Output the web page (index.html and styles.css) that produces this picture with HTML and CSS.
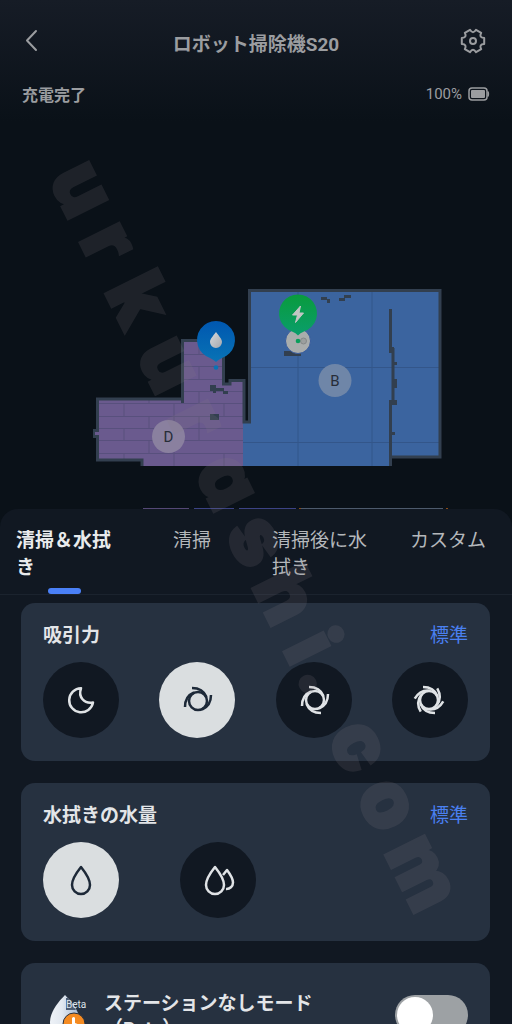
FILE: index.html
```html
<!DOCTYPE html>
<html lang="ja">
<head>
<meta charset="utf-8">
<meta name="viewport" content="width=device-width, initial-scale=1">
<title>ロボット掃除機S20</title>
<link rel="stylesheet" href="styles.css">
</head>
<body>
<svg class="defs" aria-hidden="true">
  <defs>
    <path id="blade" d="M-6 -13C1 -13 6 -10 8.500 -4"/>
    <path id="drop" d="M0 -13C4 -8 9 -1 9 5A9 9 0 0 1 -9 5C-9 -1 -4 -8 0 -13Z"/>
  </defs>
</svg>
<div class="app">
  <header class="top">
    <div class="bar">
      <button class="icon-btn" type="button" aria-label="戻る">
        <svg width="20" height="26" viewBox="0 0 20 26"><path class="line" d="M14 4L5 13.500L14 23"/></svg>
      </button>
      <h1 class="title">ロボット掃除機S20</h1>
      <button class="icon-btn" type="button" aria-label="設定">
        <svg width="28" height="28" viewBox="-13 -14 28 28">
          <path class="line" d="M11.200 -3L11.200 3Q5.600 3.200 8.200 8.200L3 11.200Q0 6.500 -3 11.200L-8.200 8.200Q-5.600 3.200 -11.200 3L-11.200 -3Q-5.600 -3.200 -8.200 -8.200L-3 -11.200Q0 -6.500 3 -11.200L8.200 -8.200Q5.600 -3.200 11.200 -3Z"/>
          <circle class="line" r="3"/>
        </svg>
      </button>
    </div>
    <div class="status">
      <span class="state">充電完了</span>
      <span class="battery">100%
        <svg width="22" height="14" viewBox="0 0 22 14" aria-hidden="true">
          <rect x="1" y="1" width="18" height="12" rx="3" fill="none" stroke="#9b9da0" stroke-width="1.500"/>
          <rect x="3" y="3" width="14" height="8" rx="1" fill="#9b9da0"/>
          <path d="M20 4.500Q21.500 7 20 9.500Z" fill="#9b9da0" stroke="#9b9da0"/>
        </svg>
      </span>
    </div>
  </header>

  <svg class="map" viewBox="0 122 512 387" role="img" aria-label="間取りマップ">
    <defs>
      <linearGradient id="pinBlue" x1="0" y1="0" x2="0" y2="1"><stop offset="0" stop-color="#0057b0"/><stop offset="1" stop-color="#0873b5"/></linearGradient>
      <linearGradient id="pinGreen" x1="0" y1="0" x2="0" y2="1"><stop offset="0" stop-color="#099b3d"/><stop offset="1" stop-color="#0a9e6b"/></linearGradient>
      <linearGradient id="grey" x1="0" y1="0" x2="1" y2="1"><stop offset="0" stop-color="#d8dadd"/><stop offset="1" stop-color="#a5a8ae"/></linearGradient>
    </defs>
    <path fill="#6a5a8e" d="M98 399H183V341H223V385H230V381H243V466H142V460H98Z"/>
    <path fill="#3b649f" d="M251 292H440V457H391V466H243V423H251Z"/>
    <path stroke="#33568a" d="M298 292V466M372 292V466M251 367.500H440M243 442.500H440"/>
    <path fill="none" stroke="#58507d" d="M183 354.500H223M183 366.500H223M183 379.500H223M183 391.500H243M98 403.500H243M98 416.500H243M98 428.500H243M98 440.500H243M98 453.500H243M199 342V354M199 366V379M199 391V403M149 399V403M124 403V416M174 403V416M224 403V416M149 416V428M199 416V428M124 428V440M174 416V428M199 428V440M174 440V453M124 453V460M149 440V453M224 453V466M174 453V466"/>
    <g fill="none" stroke="#323f4f" stroke-width="3">
      <path d="M142 466V460H97.500V399H182.500V340.500H223.500V384H230V380.500H244V422H249.500V290.500H440V457H392M182.500 398V403"/>
      <path d="M390.500 309V351M393 348V402M390.500 400V466"/>
    </g>
    <path fill="#323f4f" d="M93 429H98V438H93ZM389 347H394V353H389ZM394 362H397V365H394ZM393 379H397V388H393ZM389 400H397V405H389ZM392 432H395V435H392ZM210 385H216V388H224V391H228V394H223V391H216V393H213V391H210ZM210 414H219V420H210ZM321 297H327V299H330V303H327V300H321ZM339 298H344V295H351V298H345V301H339ZM284 351H301V356H284Z"/>
    <path fill="#6a5a8e" d="M95 432H99V435H95Z"/>
    <circle cx="168.500" cy="436.500" r="16.500" fill="#8a809f"/>
    <text class="room" x="168.500" y="442">D</text>
    <circle cx="335" cy="380.500" r="16.500" fill="#6f86a8"/>
    <text class="room" x="335" y="386">B</text>

    <path fill="url(#pinBlue)" d="M210 358A19 19 0 1 1 222 358Q218 360 216 362Q214 360 210 358Z"/>
    <circle cx="216" cy="367.500" r="2.300" fill="#0873b5"/>
    <path fill="url(#grey)" d="M216 332C219 336 222 339 222 342A6 6 0 0 1 210 342C210 339 213 336 216 332Z"/>

    <circle cx="298" cy="341" r="12.500" fill="#a9adac" stroke="#365b9e"/>
    <circle cx="303.500" cy="341" r="3" fill="#9b9f9e" stroke="#858989"/>
    <path fill="url(#pinGreen)" d="M292 331.500A19 19 0 1 1 304 331.500Q300 333 298 335.500Q296 333 292 331.500Z"/>
    <circle cx="298" cy="341" r="2.300" fill="#0a9e5b"/>
    <path fill="#c2c6c4" stroke="#c2c6c4" stroke-linejoin="round" d="M300.500 306L292.500 315H297.500L295.500 322.500L303.500 313H299Z"/>

    <path stroke="#544875" stroke-width="2" d="M143 509H189"/>
    <path stroke="#3c4384" stroke-width="2" d="M194 509H234M239 509H296"/>
    <path stroke="#4d5a6c" stroke-width="2" d="M300 509H443"/>
    <path stroke="#8c4b16" stroke-width="2" d="M299 509H301M446 509H448"/>
  </svg>

  <main class="sheet">
    <nav class="tabs" aria-label="清掃モード">
      <button class="tab is-active" type="button"><span class="tab-text">清掃＆水拭き</span></button>
      <button class="tab" type="button"><span class="tab-text">清掃</span></button>
      <button class="tab" type="button"><span class="tab-text">清掃後に水拭き</span></button>
      <button class="tab" type="button"><span class="tab-text">カスタム</span></button>
    </nav>
    <div class="cards">
      <section class="card">
        <div class="card-head"><h2 class="card-title">吸引力</h2><span class="value">標準</span></div>
        <div class="options spread">
          <button class="option" type="button" aria-label="静音">
            <svg class="glyph" viewBox="-18 -18 36 36"><path d="M0 -11.700A12 12 0 1 0 12 2.500C3 4 -3 -3 0 -11.700Z"/></svg>
          </button>
          <button class="option is-on" type="button" aria-label="標準" aria-pressed="true">
            <svg class="glyph" viewBox="-19 -19 36 36"><circle r="9"/><use href="#blade"/><use href="#blade" transform="rotate(90)"/><use href="#blade" transform="rotate(270)"/></svg>
          </button>
          <button class="option" type="button" aria-label="強">
            <svg class="glyph" viewBox="-19 -18 36 36"><circle r="9"/><use href="#blade"/><use href="#blade" transform="rotate(90)"/><use href="#blade" transform="rotate(180)"/><use href="#blade" transform="rotate(270)"/></svg>
          </button>
          <button class="option" type="button" aria-label="最大">
            <svg class="glyph" viewBox="-17 -18 36 36"><circle r="9"/><use href="#blade"/><use href="#blade" transform="rotate(60)"/><use href="#blade" transform="rotate(120)"/><use href="#blade" transform="rotate(180)"/><use href="#blade" transform="rotate(240)"/><use href="#blade" transform="rotate(300)"/></svg>
          </button>
        </div>
      </section>
      <section class="card">
        <div class="card-head"><h2 class="card-title">水拭きの水量</h2><span class="value">標準</span></div>
        <div class="options wide">
          <button class="option is-on" type="button" aria-label="標準" aria-pressed="true">
            <svg class="glyph" viewBox="-18 -18 36 36"><use href="#drop"/></svg>
          </button>
          <button class="option" type="button" aria-label="多め">
            <svg class="glyph" viewBox="-15 -18 36 36"><use href="#drop"/><path d="M8 -5L12 -10C15 -6 18 -1 18 2.500A6.500 6.500 0 0 1 11 9"/></svg>
          </button>
        </div>
      </section>
      <section class="card mode">
        <svg class="mode-icon" width="46" height="46" viewBox="43 993 46 46" aria-hidden="true">
          <defs><linearGradient id="water" x1="0" y1="0" x2="1" y2="0"><stop offset="0" stop-color="#eef2f7"/><stop offset="0.400" stop-color="#e2e8f0"/><stop offset="1" stop-color="#9fb5d2"/></linearGradient></defs>
          <path fill="url(#water)" d="M65 995C57 1003 50 1013 50 1022A15 15 0 0 0 80 1022C80 1013 73 1003 65 995Z"/>
          <path fill="#4b5b72" d="M66 998H68L76 1010H66Z"/>
          <text class="beta" x="66" y="1008">Beta</text>
          <circle cx="74" cy="1024" r="11" fill="#f58b22" stroke="#263140"/>
          <path fill="#fff" d="M72 1018Q74 1016 75 1018V1023L80 1025V1031H71L68 1026L72 1025Z"/>
        </svg>
        <label class="mode-name" for="station">ステーションなしモード<br>（Beta）</label>
        <input class="switch" id="station" type="checkbox" role="switch">
      </section>
    </div>
  </main>

  <svg class="watermark" viewBox="0 0 512 1024" aria-hidden="true">
    <text transform="translate(79 188) rotate(63.500)" y="23" x="2 62 126 198 260 329 395 457 514 546 624 689 766">urkurashi.com</text>
  </svg>
</div>
</body>
</html>
```
FILE: styles.css
```css
* { box-sizing: border-box; }

body {
  margin: 0;
  background: #0a1118;
  color: #e3e5e8;
  font-family: Roboto, "Noto Sans CJK JP", sans-serif;
}

button {
  border: 0;
  padding: 0;
  background: none;
  color: inherit;
  font: inherit;
}

h1, h2 { margin: 0; }

.defs {
  position: absolute;
  width: 0;
  height: 0;
}

.app {
  position: relative;
  display: flex;
  flex-direction: column;
  height: 100vh;
  overflow: hidden;
}

.top {
  flex: none;
  height: 122px;
  padding: 22px 22px 0;
  background: linear-gradient(#161c26, #0a1118);
  color: #9b9da0;
}

.bar {
  display: flex;
  align-items: center;
  justify-content: space-between;
  height: 40px;
}

.icon-btn {
  display: flex;
  width: 30px;
  height: 30px;
}

.line {
  fill: none;
  stroke: #9b9da0;
  stroke-width: 2;
  stroke-linecap: round;
  stroke-linejoin: round;
}

.title {
  padding-top: 5px;
  font-size: 19px;
  line-height: 28px;
  font-weight: 700;
}

.status {
  display: flex;
  align-items: center;
  justify-content: space-between;
  height: 24px;
  margin-top: 20px;
}

.state {
  padding-top: 4px;
  font-size: 16px;
  line-height: 24px;
  font-weight: 700;
}

.battery {
  display: flex;
  align-items: center;
  gap: 6px;
  font-size: 15px;
  line-height: 24px;
}

.map {
  display: block;
  flex: none;
  width: 100%;
}

.room {
  fill: #272d38;
  font-size: 15px;
  text-anchor: middle;
}

.sheet {
  flex: 1;
  min-height: 0;
  display: flex;
  flex-direction: column;
  border-radius: 18px 18px 0 0;
  background: #111822;
}

.tabs {
  flex: none;
  display: grid;
  grid-template-columns: repeat(4, 1fr);
  padding-top: 18px;
  border-bottom: 1px solid #1b232e;
}

.tab {
  display: flex;
  flex-direction: column;
  align-items: center;
  justify-content: space-between;
  gap: 7px;
  color: #b4b7bb;
  font-size: 19px;
  line-height: 27px;
}

.tab-text {
  max-width: 96px;
  text-align: left;
}

.tab::after {
  content: "";
  width: 33px;
  height: 6px;
  border-radius: 3px;
}

.is-active {
  color: #e9ebed;
  font-weight: 700;
}

.is-active::after { background: #4a80f7; }

.cards {
  flex: 1;
  min-height: 0;
  display: flex;
  flex-direction: column;
  gap: 22px;
  padding: 8px 22px 0 21px;
  overflow: hidden;
}

.card {
  flex: none;
  padding: 18px 22px 23px;
  border-radius: 14px;
  background: #263140;
}

.card-head {
  display: flex;
  justify-content: space-between;
  padding-top: 1px;
  font-size: 19px;
  line-height: 28px;
}

.card-title {
  font-size: 19px;
  font-weight: 700;
}

.value { color: #4a80f0; }

.options {
  display: flex;
  margin-top: 12px;
}

.spread { justify-content: space-between; }

.wide { gap: 61px; }

.option {
  display: flex;
  align-items: center;
  justify-content: center;
  width: 76px;
  height: 76px;
  border-radius: 50%;
  background: #111822;
  color: #e0e3e6;
}

.is-on {
  background: #dadee0;
  color: #1d2938;
}

.glyph {
  width: 36px;
  height: 36px;
  fill: none;
  stroke: currentColor;
  stroke-width: 2.500;
  stroke-linejoin: round;
}

.mode {
  display: flex;
  align-items: flex-start;
  gap: 15px;
  padding-top: 28px;
}

.mode-icon {
  flex: none;
  margin-top: 2px;
}

.beta {
  fill: #dde3ea;
  font-size: 10px;
}

.mode-name {
  flex: 1;
  font-size: 19px;
  line-height: 25px;
  font-weight: 700;
}

.switch {
  appearance: none;
  flex: none;
  width: 73px;
  height: 40px;
  margin: 4px 0 0;
  padding: 2px;
  border-radius: 20px;
  background: #9da1a4;
}

.switch::before {
  content: "";
  display: block;
  width: 36px;
  height: 36px;
  border-radius: 50%;
  background: #fff;
}

.switch:checked { background: #4a80f7; }

.switch:checked::before { margin-left: auto; }

.watermark {
  position: absolute;
  top: 0;
  left: 0;
  width: 100%;
  pointer-events: none;
  opacity: 0.16;
  fill: #877d84;
  stroke: #877d84;
  stroke-width: 4;
  font-family: Inter, sans-serif;
  font-size: 78px;
  font-weight: 800;
  font-feature-settings: "cv11";
  text-anchor: middle;
}
```
